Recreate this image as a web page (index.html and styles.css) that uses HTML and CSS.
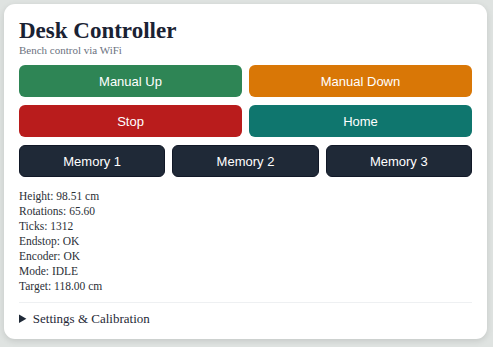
FILE: index.html
```html
<!DOCTYPE html>
<html>
<head>
	<title>Desk Controller</title>
	<link rel="stylesheet" href="styles.css">
</head>
<body>
	<div class="card">
		<h1 class="title">Desk Controller</h1>
		<p class="subtitle">Bench control via WiFi</p>

		<div class="row two">
			<button class="btn up">Manual Up</button>
			<button class="btn down">Manual Down</button>
		</div>
		<div class="row two">
			<button class="btn stop">Stop</button>
			<button class="btn home">Home</button>
		</div>
		<div class="row three">
			<button class="btn mem">Memory 1</button>
			<button class="btn mem">Memory 2</button>
			<button class="btn mem">Memory 3</button>
		</div>

		<div class="status">
			<div>Height: 98.51 cm</div>
			<div>Rotations: 65.60</div>
			<div>Ticks: 1312</div>
			<div>Endstop: OK</div>
			<div>Encoder: OK</div>
			<div>Mode: IDLE</div>
			<div>Target: 118.00 cm</div>
		</div>

		<details class="settings">
			<summary>Settings &amp; Calibration</summary>
		</details>
	</div>
</body>
</html>
```
FILE: styles.css
```css
* {
	margin: 0;
	padding: 0;
	box-sizing: border-box;
}

body {
	background-color: #dfe3e1;
	font-family: "Liberation Serif", "DejaVu Serif", serif;
	color: #1f2937;
	padding: 4px 6px 8px 4px;
}

.card {
	background-color: #fff;
	border-radius: 11px;
	box-shadow: 0 2px 6px rgba(0, 0, 0, 0.12);
	padding: 14px 15px 12px 15px;
	height: 335px;
}

.title {
	font-size: 23px;
	font-weight: bold;
	line-height: 25px;
	color: #1a2233;
}

.subtitle {
	font-size: 11px;
	color: #6b7280;
	line-height: 14px;
	margin-bottom: 8px;
}

.row {
	display: grid;
	gap: 7px;
	margin-bottom: 8px;
}

.row.two {
	grid-template-columns: 1fr 1fr;
}

.row.three {
	grid-template-columns: 1fr 1fr 1fr;
}

.btn {
	height: 32px;
	border: none;
	border-radius: 6px;
	color: #fff;
	font-family: "Liberation Sans", Arial, sans-serif;
	font-size: 13px;
}

.up { background-color: #2e8555; }
.down { background-color: #d97706; }
.stop { background-color: #b91c1c; }
.home { background-color: #0f766e; }
.mem {
	background-color: #1f2937;
	border: 1px solid #111827;
}

.status {
	margin-top: 12px;
	font-size: 11.5px;
	line-height: 15px;
	color: #2b2f36;
}

.settings {
	margin-top: 8px;
	border-top: 1px solid #eef0f2;
	padding-top: 8px;
}

.settings summary {
	font-size: 13px;
	line-height: 16px;
	color: #1f2937;
	cursor: pointer;
}
```
